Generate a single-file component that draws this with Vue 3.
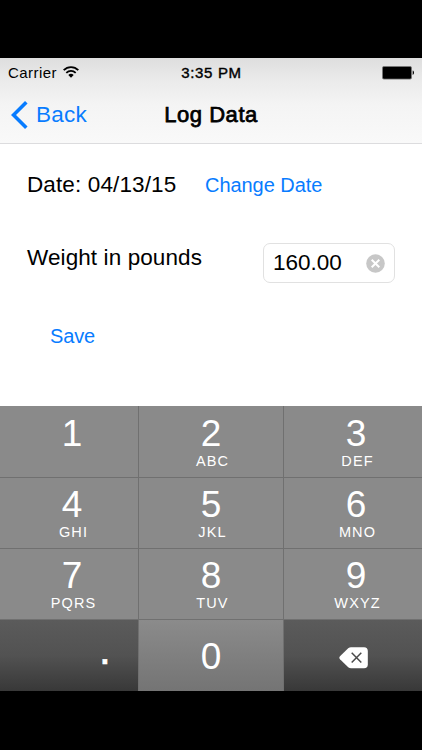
<script setup>
import { ref } from 'vue'

const weight = ref('160.00')
const keys = [
  { digit: '1', letters: '' },
  { digit: '2', letters: 'ABC' },
  { digit: '3', letters: 'DEF' },
  { digit: '4', letters: 'GHI' },
  { digit: '5', letters: 'JKL' },
  { digit: '6', letters: 'MNO' },
  { digit: '7', letters: 'PQRS' },
  { digit: '8', letters: 'TUV' },
  { digit: '9', letters: 'WXYZ' },
]
</script>

<template>
  <div class="screen">
    <header class="top">
      <div class="status">
        <div class="carrier">
          <span>Carrier</span>
          <svg class="wifi" width="16" height="12" viewBox="0 0 16 12">
            <path d="M.7 4.2C4.8.1 11.2.1 15.3 4.2" fill="none" stroke="#000" stroke-width="1.9" />
            <path d="M3.3 6.9c2.7-2.6 6.7-2.6 9.4 0" fill="none" stroke="#000" stroke-width="1.8" />
            <path d="M5.3 8.9c1.6-1.4 3.8-1.4 5.4 0L8 11.7z" fill="#000" />
          </svg>
        </div>
        <span class="time">3:35 PM</span>
        <svg class="battery" width="33" height="14" viewBox="0 0 33 14">
          <rect x=".5" y=".5" width="29" height="12.6" rx="1.4" fill="#000" stroke="#777" stroke-width=".8" />
          <path d="M30.7 4.6c1.7.5 1.7 3.9 0 4.4z" fill="#000" />
        </svg>
      </div>
      <nav class="nav">
        <button class="back">
          <svg width="17" height="28" viewBox="0 0 17 28">
            <path d="M15.3 1.3 2.5 14l12.8 12.7" fill="none" stroke="#087cff" stroke-width="3.6" />
          </svg>
          <span>Back</span>
        </button>
        <h1 class="title">Log Data</h1>
      </nav>
    </header>

    <main class="form">
      <div class="date-row">
        <span class="date">Date: 04/13/15</span>
        <button class="link change">Change Date</button>
      </div>
      <div class="weight-row">
        <label class="label">Weight in pounds</label>
        <div class="field">
          <span class="value">{{ weight }}</span>
          <svg width="19" height="19" viewBox="0 0 19 19">
            <circle cx="9.5" cy="9.5" r="9.3" fill="#c7c7c7" />
            <path d="m5.7 5.7 7.6 7.6m0-7.6-7.6 7.6" stroke="#fff" stroke-width="2" />
          </svg>
        </div>
      </div>
      <button class="link save">Save</button>
    </main>

    <section class="keypad">
      <button v-for="key in keys" :key="key.digit" class="key">
        <span class="digit">{{ key.digit }}</span>
        <span class="letters">{{ key.letters }}</span>
      </button>
      <button class="key dark point">.</button>
      <button class="key zero"><span class="digit">0</span></button>
      <button class="key dark delete">
        <svg width="29" height="22" viewBox="0 0 29 22">
          <path d="M9.2 1.3Q10.5.2 12 .2h13Q28.8.2 28.8 4v13.5q0 3.8-3.8 3.8H12q-1.5 0-2.8-1.1L1 12.3q-1.3-1.5 0-3z" fill="#fff" />
          <path d="m12.7 5.8 9.6 9.8m0-9.8-9.6 9.8" stroke="#4b4b4b" stroke-width="1.5" />
        </svg>
      </button>
    </section>
  </div>
</template>

<style>
body {
  margin: 0;
  background: #000;
}
</style>

<style scoped>
.screen {
  width: 422px;
  height: 750px;
  box-sizing: border-box;
  padding-top: 58px;
  overflow: hidden;
  background: #000;
  color: #000;
  font-family: "Liberation Sans", Arial, sans-serif;
}
button {
  margin: 0;
  padding: 0;
  border: 0;
  background: none;
  font: inherit;
  color: inherit;
}
svg {
  display: block;
  flex: none;
}
.top {
  height: 86px;
  box-sizing: border-box;
  border-bottom: 1px solid #dcdcde;
  background: linear-gradient(#dedede, #eaeaea 25%, #f4f4f4 55%, #f9f9f9);
}
.status {
  display: grid;
  grid-template-columns: 1fr auto 1fr;
  align-items: center;
  height: 29px;
  padding: 0 7px 0 8px;
  font-size: 15px;
}
.carrier {
  display: flex;
  align-items: center;
  gap: 7px;
  letter-spacing: 0.45px;
}
.wifi {
  margin-bottom: 2px;
  margin-left: -1px;
}
.time {
  font-size: 15px;
  letter-spacing: 0.65px;
  -webkit-text-stroke: 0.4px #000;
}
.battery {
  justify-self: end;
}
.nav {
  display: grid;
  grid-template-columns: 1fr auto 1fr;
  align-items: center;
  height: 56px;
  padding-left: 11px;
  padding-right: 11px;
}
.back {
  display: flex;
  align-items: center;
  gap: 8px;
  color: #087cff;
  font-size: 22.5px;
  letter-spacing: 0.25px;
}
.title {
  margin: 0;
  font-size: 22px;
  font-weight: 400;
  letter-spacing: 0.55px;
  -webkit-text-stroke: 0.75px #000;
}
.form {
  height: 262px;
  box-sizing: border-box;
  padding: 27px 27px 0;
  background: #fff;
}
.date-row {
  display: flex;
  align-items: center;
  height: 28px;
}
.date {
  width: 178px;
  font-size: 22.5px;
  letter-spacing: 0.12px;
  white-space: nowrap;
}
.link {
  color: #087cff;
  font-size: 20px;
  line-height: 24px;
}
.change {
  letter-spacing: -0.05px;
}
.weight-row {
  display: flex;
  align-items: flex-start;
  justify-content: space-between;
  height: 40px;
  margin-top: 44px;
}
.label {
  padding-top: 1px;
  font-size: 22.5px;
  line-height: 28px;
  letter-spacing: 0.1px;
}
.field {
  display: flex;
  align-items: center;
  justify-content: space-between;
  width: 132px;
  height: 40px;
  box-sizing: border-box;
  padding: 0 9px;
  border: 1px solid #e1e1e1;
  border-radius: 7px;
  background: #fff;
}
.value {
  font-size: 22.5px;
}
.save {
  display: block;
  margin: 41px 0 0 23px;
  letter-spacing: -0.15px;
}
.keypad {
  display: grid;
  grid-template-columns: 138px 144px 138px;
  grid-template-rows: 71px 70px 70px 71px;
  gap: 1px;
  height: 285px;
  background: #707070;
}
.key {
  display: flex;
  flex-direction: column;
  align-items: center;
  padding-top: 8px;
  background: #8a8a8a;
  color: #fff;
}
.key:nth-child(3n + 1),
.key:nth-child(3n) {
  padding-left: 6px;
}
.key:nth-child(-n + 3) {
  padding-top: 9px;
}
.digit {
  font-size: 37px;
  line-height: 38px;
}
.letters {
  padding-left: 3px;
  font-size: 14.5px;
  line-height: 17px;
  letter-spacing: 1.1px;
}
.zero {
  padding-top: 18px;
  background: linear-gradient(#8b8b8b, #747474);
}
.dark {
  background: linear-gradient(#5b5b5b, #525252 50%, #383838);
}
.key.point {
  align-items: flex-end;
  padding: 10px 27px 0 0;
  font-size: 44px;
  line-height: 38px;
  -webkit-text-stroke: 0.5px #fff;
}
.key.delete {
  justify-content: center;
  padding: 4px 0 0 1px;
}
</style>
